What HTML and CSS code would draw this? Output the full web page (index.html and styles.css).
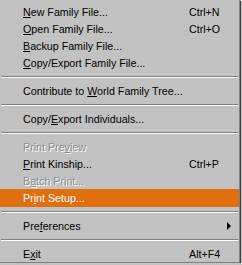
FILE: index.html
```html
<!DOCTYPE html>
<html lang="en">
<head>
    <meta charset="UTF-8">
    <title>File menu</title>
    <link rel="stylesheet" href="styles.css">
</head>
<body>
    <div class="menu">
        <div class="item"><span class="label"><u>N</u>ew Family File...</span><span class="key">Ctrl+N</span></div>
        <div class="item"><span class="label"><u>O</u>pen Family File...</span><span class="key">Ctrl+O</span></div>
        <div class="item"><span class="label"><u>B</u>ackup Family File...</span></div>
        <div class="item"><span class="label"><u>C</u>opy/Export Family File...</span></div>
        <div class="sep"></div>
        <div class="item"><span class="label">Contribute to <u>W</u>orld Family Tree...</span></div>
        <div class="sep"></div>
        <div class="item"><span class="label">Copy/<u>E</u>xport Individuals...</span></div>
        <div class="sep"></div>
        <div class="item disabled"><span class="label">Print Pre<u>v</u>iew</span></div>
        <div class="item"><span class="label"><u>P</u>rint Kinship...</span><span class="key">Ctrl+P</span></div>
        <div class="item disabled"><span class="label">B<u>a</u>tch Print...</span></div>
        <div class="item active"><span class="label">Pr<u>i</u>nt Setup...</span></div>
        <div class="sep"></div>
        <div class="item"><span class="label">Pre<u>f</u>erences</span><span class="arrow"></span></div>
        <div class="sep"></div>
        <div class="item"><span class="label">E<u>x</u>it</span><span class="key">Alt+F4</span></div>
    </div>
</body>
</html>
```

FILE: styles.css
```css
body, html {
    margin: 0;
    padding: 0;
    background-color: #c2c2c2;
}
.menu {
    width: 240px;
    height: 263px;
    padding-top: 3px;
    box-sizing: border-box;
    background-color: #c2c2c2;
    border-right: 1px solid #808080;
    border-bottom: 1px solid #808080;
    box-shadow: 1px 1px 0 #404040;
    font-family: "Liberation Sans", Arial, sans-serif;
    font-size: 10.7px;
    color: #000;
}
.item {
    height: 17px;
    display: flex;
    align-items: center;
    position: relative;
}
.label {
    padding-left: 23px;
    width: 166px;
    white-space: nowrap;
}
.key {
    white-space: nowrap;
}
.item u {
    text-decoration: underline;
    text-underline-offset: 1px;
}
.disabled {
    color: #8c8c8c;
    text-shadow: 1px 1px 0 #fff;
}
.active {
    height: 18px;
    margin-bottom: -1px;
    background-color: #e0700f;
    color: #fff;
}
.arrow {
    position: absolute;
    right: 8px;
    top: 5px;
    width: 0;
    height: 0;
    border-top: 4px solid transparent;
    border-bottom: 4px solid transparent;
    border-left: 4px solid #000;
}
.sep {
    height: 11px;
    display: flex;
    align-items: center;
}
.sep::before {
    content: "";
    display: block;
    width: 100%;
    margin: 0 1px;
    border-top: 1px solid #808080;
    border-bottom: 1px solid #fff;
    height: 0;
}
```
